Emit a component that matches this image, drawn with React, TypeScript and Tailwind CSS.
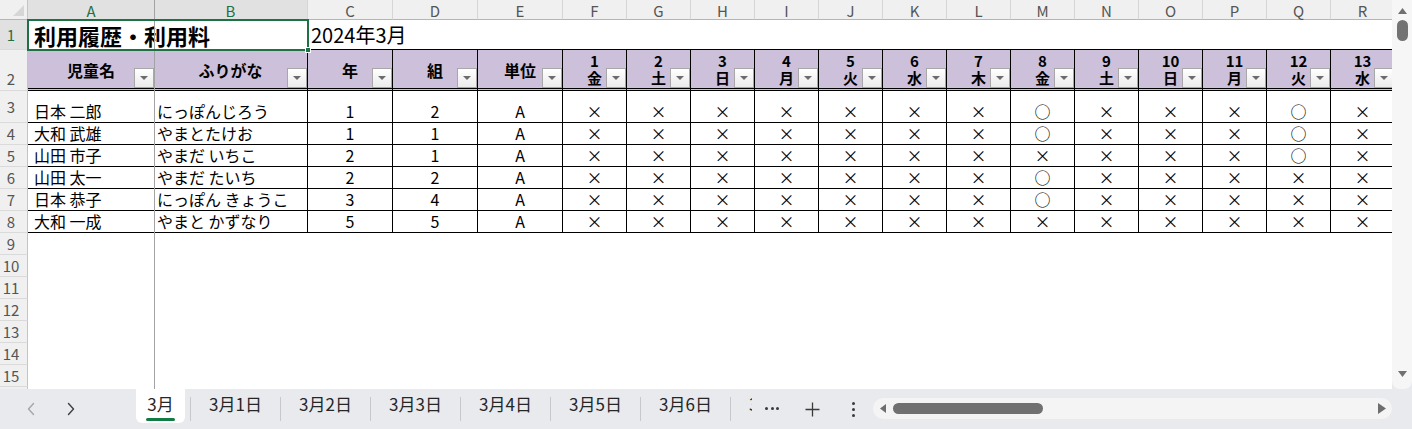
import React from "react";

const COLS = ["A", "B", "C", "D", "E", "F", "G", "H", "I", "J", "K", "L", "M", "N", "O", "P", "Q", "R"];

const DAYS = [
  ["1", "金"],
  ["2", "土"],
  ["3", "日"],
  ["4", "月"],
  ["5", "火"],
  ["6", "水"],
  ["7", "木"],
  ["8", "金"],
  ["9", "土"],
  ["10", "日"],
  ["11", "月"],
  ["12", "火"],
  ["13", "水"],
];

const KIDS = [
  { row: 3, name: "日本 二郎", kana: "にっぽんじろう", year: "1", group: "2", unit: "A", marks: "xxxxxxxoxxxox" },
  { row: 4, name: "大和 武雄", kana: "やまとたけお", year: "1", group: "1", unit: "A", marks: "xxxxxxxoxxxox" },
  { row: 5, name: "山田 市子", kana: "やまだ いちこ", year: "2", group: "1", unit: "A", marks: "xxxxxxxxxxxox" },
  { row: 6, name: "山田 太一", kana: "やまだ たいち", year: "2", group: "2", unit: "A", marks: "xxxxxxxoxxxxx" },
  { row: 7, name: "日本 恭子", kana: "にっぽん きょうこ", year: "3", group: "4", unit: "A", marks: "xxxxxxxoxxxxx" },
  { row: 8, name: "大和 一成", kana: "やまと かずなり", year: "5", group: "5", unit: "A", marks: "xxxxxxxxxxxxx" },
];

const TABS = ["3月1日", "3月2日", "3月3日", "3月4日", "3月5日", "3月6日", "3月7日"];

function RowHead({ n, active = false, bottom = false }: { n: number; active?: boolean; bottom?: boolean }) {
  return (
    <div
      className={`flex justify-center border-r border-b border-r-[#c4c4c4] border-b-[#dadada] pr-[5px] text-[15px] leading-[20px] ${
        bottom ? "items-end pb-[1px]" : "items-center"
      } ${active ? "bg-[#e1e1e1] text-[#1e7145]" : "bg-[#f0f0f0] text-[#555]"}`}
    >
      {n}
    </div>
  );
}

function FilterButton() {
  return (
    <span className="absolute right-0 bottom-0 flex h-[20px] w-[20px] items-center justify-center border border-[#a8a8a8] bg-linear-to-b from-white to-[#ebebeb]">
      <svg width="8" height="4" viewBox="0 0 8 4">
        <path d="M0 0h8L4 4z" fill="#6b6b6b" />
      </svg>
    </span>
  );
}

function Chevron({ dir, color }: { dir: "left" | "right"; color: string }) {
  return (
    <svg width="10" height="14" viewBox="0 0 10 14">
      <path
        d={dir === "left" ? "M7.5 1.5L2.5 7l5 5.5" : "M2.5 1.5l5 5.5-5 5.5"}
        fill="none"
        stroke={color}
        strokeWidth="1.4"
        strokeLinecap="round"
        strokeLinejoin="round"
      />
    </svg>
  );
}

export default function App() {
  const headCell = "relative border-b-[3px] border-double border-black bg-[#ccc0da] font-bold text-black";
  const dataCell = "flex items-end pb-[1px] border-b border-black text-[16px] leading-[20px] text-black whitespace-nowrap";

  return (
    <div className="relative h-[429px] w-[1412px] overflow-hidden bg-[#e8eaed] font-['Noto_Sans_CJK_JP',sans-serif]">
      <div className="flex h-[389px]">
        {/* sheet */}
        <div className="relative h-full w-[1392px] overflow-hidden bg-white">
          <div className="grid grid-cols-[28px_126px_154px_85px_85px_85px_repeat(13,64px)] grid-rows-[20px_30px_41px_32px_repeat(12,22px)]">
            {/* column headers */}
            <div className="relative border-r border-b border-r-[#c4c4c4] border-b-[#b5b5b5] bg-[#f0f0f0]">
              <svg className="absolute right-[3px] bottom-[3px]" width="11" height="11" viewBox="0 0 11 11">
                <path d="M11 0v11H0z" fill="#d6d6d6" />
              </svg>
            </div>
            {COLS.map((c, i) => (
              <div
                key={c}
                className={`flex items-center justify-center border-b border-b-[#b5b5b5] pt-[2px] text-[15px] leading-[18px] ${
                  i === 0 ? "" : "border-r border-r-[#d6d6d6]"
                } ${i < 2 ? "bg-[#e1e1e1] text-[#1e7145]" : "bg-[#f0f0f0] text-[#555]"}`}
              >
                {c}
              </div>
            ))}

            {/* row 1 */}
            <RowHead n={1} active />
            <div className="col-span-2 flex items-center pl-[6px] text-[22px] leading-[30px] font-bold text-black whitespace-nowrap">
              利用履歴・利用料
            </div>
            <div className="flex items-center border-b border-black pl-[3px] text-[20px] leading-[29px] text-black whitespace-nowrap">
              2024年3月
            </div>
            {COLS.slice(3).map((c) => (
              <div key={c} className="border-b border-black" />
            ))}

            {/* row 2: table header */}
            <RowHead n={2} bottom />
            {["児童名", "ふりがな", "年", "組", "単位"].map((t, i) => (
              <div
                key={t}
                className={`${headCell} flex items-center justify-center pt-[1px] text-[16px] leading-[20px] ${i === 0 ? "" : "border-r"}`}
              >
                {t}
                <FilterButton />
              </div>
            ))}
            {DAYS.map(([d, w]) => (
              <div
                key={d}
                className={`${headCell} flex flex-col items-center justify-start border-r pt-[2px] text-[15px] leading-[17px]`}
              >
                <span>{d}</span>
                <span>{w}</span>
                <FilterButton />
              </div>
            ))}

            {/* data rows */}
            {KIDS.map((k) => (
              <React.Fragment key={k.row}>
                <RowHead n={k.row} />
                <div className={`${dataCell} pl-[6px]`}>{k.name}</div>
                <div className={`${dataCell} border-r pl-[3px]`}>{k.kana}</div>
                <div className={`${dataCell} justify-center border-r`}>{k.year}</div>
                <div className={`${dataCell} justify-center border-r`}>{k.group}</div>
                <div className={`${dataCell} justify-center border-r`}>{k.unit}</div>
                {k.marks.split("").map((m, i) => (
                  <div key={i} className={`${dataCell} justify-center border-r`}>
                    {m === "o" ? "○" : "×"}
                  </div>
                ))}
              </React.Fragment>
            ))}

            {/* empty rows */}
            {[9, 10, 11, 12, 13, 14, 15, 16].map((n) => (
              <React.Fragment key={n}>
                <RowHead n={n} />
                <div className="col-span-18" />
              </React.Fragment>
            ))}
          </div>

          {/* freeze pane divider */}
          <div className="pointer-events-none absolute top-0 bottom-0 left-[154px] w-px bg-[#a3a3a3]" />

          {/* active cell selection A1:B1 */}
          <div className="pointer-events-none absolute top-[19px] left-[27px] h-[32px] w-[282px] border-2 border-[#1e7145]" />
          <div className="pointer-events-none absolute top-[47px] left-[305px] h-[6px] w-[6px] border border-white bg-[#1e7145]" />
        </div>

        {/* vertical scrollbar */}
        <div className="flex h-full w-[20px] flex-col items-center rounded-b-[8px] bg-[#f6f6f6]">
          <svg className="mt-[8px]" width="9" height="6" viewBox="0 0 9 6">
            <path d="M4.5 0L9 6H0z" fill="#707070" />
          </svg>
          <div className="mt-[6px] h-[21px] w-[11px] rounded-full bg-[#737373]" />
          <div className="flex-1" />
          <svg className="mb-[12px]" width="9" height="6" viewBox="0 0 9 6">
            <path d="M0 0h9L4.5 6z" fill="#707070" />
          </svg>
        </div>
      </div>

      {/* sheet tab bar */}
      <div className="flex h-[40px] items-start">
        <div className="flex h-[40px] w-[136px] items-center gap-[30px] pl-[26px]">
          <Chevron dir="left" color="#a6a6a6" />
          <Chevron dir="right" color="#3f3f3f" />
        </div>

        <div className="flex h-[34px] w-[616px] overflow-hidden">
          <div className="relative flex h-[34px] w-[49px] shrink-0 items-center justify-center rounded-b-[6px] bg-white pb-[4px] text-[17px] leading-[20px] text-[#262626]">
            3月
            <span className="absolute bottom-[2px] left-[10px] h-[3px] w-[29px] rounded-full bg-[#107c41]" />
          </div>
          <div className="w-[5px] shrink-0" />
          {TABS.map((t) => (
            <React.Fragment key={t}>
              <div className="mt-[8px] h-[24px] w-px shrink-0 bg-[#c6c8cc]" />
              <div className="flex h-[34px] w-[89px] shrink-0 items-center justify-center pb-[4px] text-[17px] leading-[20px] whitespace-nowrap text-[#262626]">
                {t}
              </div>
            </React.Fragment>
          ))}
        </div>

        <div className="ml-[13px] flex h-[38px] w-[14px] items-center justify-between">
          <span className="h-[3px] w-[3px] rounded-full bg-[#3a3a3a]" />
          <span className="h-[3px] w-[3px] rounded-full bg-[#3a3a3a]" />
          <span className="h-[3px] w-[3px] rounded-full bg-[#3a3a3a]" />
        </div>

        <div className="ml-[26px] flex h-[40px] w-[15px] items-center justify-center">
          <svg width="15" height="15" viewBox="0 0 15 15">
            <path d="M7.5 0.5v14M0.5 7.5h14" stroke="#3a3a3a" strokeWidth="1.3" />
          </svg>
        </div>

        <div className="ml-[30px] flex h-[40px] w-[6px] flex-col items-center justify-center gap-[3px]">
          <span className="h-[3px] w-[3px] rounded-full bg-[#3a3a3a]" />
          <span className="h-[3px] w-[3px] rounded-full bg-[#3a3a3a]" />
          <span className="h-[3px] w-[3px] rounded-full bg-[#3a3a3a]" />
        </div>

        <div className="mt-[9px] ml-[17px] flex h-[21px] w-[519px] items-center rounded-full bg-[#f4f4f4] pr-[6px] pl-[7px]">
          <svg width="6" height="9" viewBox="0 0 6 9">
            <path d="M6 0v9L0 4.5z" fill="#6e6e6e" />
          </svg>
          <div className="ml-[7px] h-[11px] w-[150px] rounded-full bg-[#707070]" />
          <div className="flex-1" />
          <svg width="8" height="11" viewBox="0 0 8 11">
            <path d="M0 0v11l8-5.5z" fill="#6e6e6e" />
          </svg>
        </div>
      </div>
    </div>
  );
}
